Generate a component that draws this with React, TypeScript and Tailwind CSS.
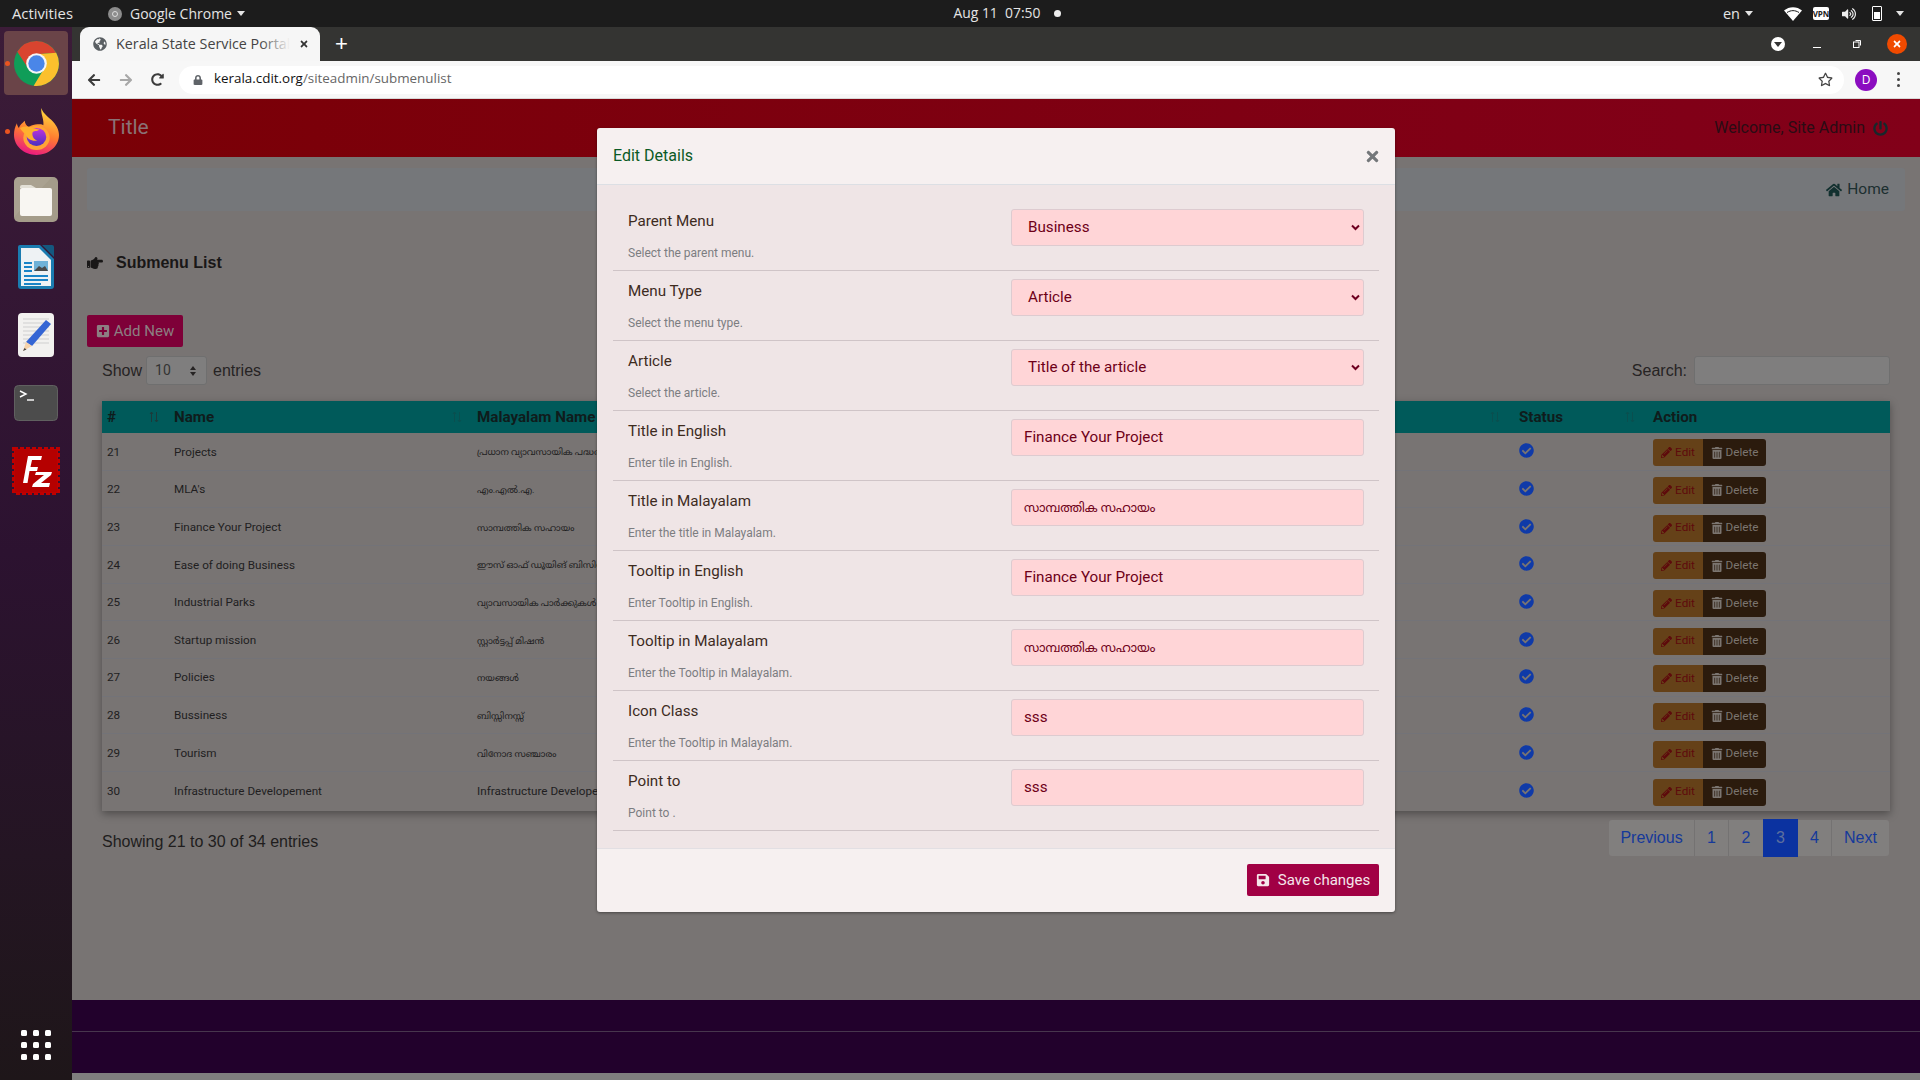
import React from "react";
import { FaHandPointRight, FaHome, FaPencilAlt, FaTrashAlt, FaSave, FaPlusSquare, FaCheckCircle, FaPowerOff, FaGlobeAmericas, FaLock, FaRegStar, FaArrowLeft, FaArrowRight, FaRedoAlt, FaTimes, FaVolumeUp } from "react-icons/fa";

const rows = [
  ["21", "Projects", "പ്രധാന വ്യാവസായിക പദ്ധതികൾ"],
  ["22", "MLA's", "എം.എൽ.എ."],
  ["23", "Finance Your Project", "സാമ്പത്തിക സഹായം"],
  ["24", "Ease of doing Business", "ഈസ് ഓഫ് ഡൂയിങ് ബിസിനസ്"],
  ["25", "Industrial Parks", "വ്യാവസായിക പാർക്കുകൾ"],
  ["26", "Startup mission", "സ്റ്റാർട്ടപ്പ് മിഷൻ"],
  ["27", "Policies", "നയങ്ങൾ"],
  ["28", "Bussiness", "ബിസ്സിനസ്സ്"],
  ["29", "Tourism", "വിനോദ സഞ്ചാരം"],
  ["30", "Infrastructure Developement", "Infrastructure Developement"],
];

const fields: [string, string, string, boolean][] = [
  ["Parent Menu", "Select the parent menu.", "Business", true],
  ["Menu Type", "Select the menu type.", "Article", true],
  ["Article", "Select the article.", "Title of the article", true],
  ["Title in English", "Enter tile in English.", "Finance Your Project", false],
  ["Title in Malayalam", "Enter the title in Malayalam.", "സാമ്പത്തിക സഹായം", false],
  ["Tooltip in English", "Enter Tooltip in English.", "Finance Your Project", false],
  ["Tooltip in Malayalam", "Enter the Tooltip in Malayalam.", "സാമ്പത്തിക സഹായം", false],
  ["Icon Class", "Enter the Tooltip in Malayalam.", "sss", false],
  ["Point to", "Point to .", "sss", false],
];

function SortIcon({ dark }: { dark?: boolean }) {
  return (
    <svg width="10" height="12" viewBox="0 0 10 12" className={dark ? "text-[#1c3a3a]" : "text-[#0a4f4f]"} fill="none" stroke="currentColor" strokeWidth="1">
      <path d="M2.5 11V1.5M1 3l1.5-2L4 3M7.5 1v9.5M6 9l1.5 2L9 9" />
    </svg>
  );
}

function ChromeLogo() {
  return (
    <svg width="45" height="45" viewBox="0 0 48 48">
      <circle cx="24" cy="24" r="24" fill="#0f9d58" />
      <path d="M24 0A24 24 0 0 1 45 12.500L24 14 15 29 3.500 11.500A24 24 0 0 1 24 0Z" fill="#d9442f" />
      <path d="M45 12.500A24 24 0 0 1 21 47.800L33 28 24 14Z" fill="#fbc02d" />
      <circle cx="24" cy="24" r="11" fill="#f5f5f5" />
      <circle cx="24" cy="24" r="8.700" fill="#4a86e8" />
    </svg>
  );
}

function FirefoxLogo() {
  return (
    <svg width="45" height="47" viewBox="0 0 46 52" preserveAspectRatio="none">
      <defs>
        <linearGradient id="ffa" x1="0.7" y1="0" x2="0.4" y2="1">
          <stop offset="0" stopColor="#ffe03d" />
          <stop offset="0.55" stopColor="#ff7a30" />
          <stop offset="1" stopColor="#ea1a80" />
        </linearGradient>
        <linearGradient id="ffb" x1="0.5" y1="0" x2="0.5" y2="1">
          <stop offset="0" stopColor="#c233df" />
          <stop offset="1" stopColor="#4a2fbd" />
        </linearGradient>
      </defs>
      <path d="M28 0c1 5 5 8 10 13 5 5 8 11 8 17C46 43 35 52 23 52 10 52 0 42 0 30c0-5 1-9 3-13 0 2 1 4 2 5 1-3 3-5 6-8 0 3 2 6 4 7 3-2 6-3 9-3 3 0 5 0 6 1 1-6-3-13-2-19Z" fill="url(#ffa)" />
      <circle cx="23" cy="33" r="13.500" fill="#ffa436" />
      <circle cx="23" cy="32" r="10" fill="url(#ffb)" />
      <path d="M6 22c4-2 9-2 13 0 3 1 5 1 7 2-3 2-6 1-7 3-1 3 1 8 5 9-6 1-11-2-12-7-2-1-4-4-6-7Z" fill="#ffb02e" />
    </svg>
  );
}

function FilesIcon() {
  return (
    <svg width="44" height="45" viewBox="0 0 44 45">
      <rect x="0" y="0" width="44" height="45" rx="5" fill="#a49c8a" />
      <path d="M0 40L38 0h-33a5 5 0 0 0-5 5Z" fill="#b3ac9a" opacity="0.4" />
      <path d="M6 10a2 2 0 0 1 2-2h9l5 3H6Z" fill="#e3e0d6" />
      <rect x="6" y="11" width="32" height="28" rx="2" fill="#f8f6f2" />
    </svg>
  );
}

function WriterIcon() {
  return (
    <svg width="36" height="44" viewBox="0 0 36 44">
      <path d="M2 0h20l14 14v27a3 3 0 0 1-3 3H3a3 3 0 0 1-3-3V2a2 2 0 0 1 2-2Z" fill="#1a7cb0" />
      <path d="M3 3h18l12 12v26H3Z" fill="#eef2f4" />
      <path d="M24 0h10a2 2 0 0 1 2 2v10Z" fill="#14587f" />
      <rect x="6" y="17" width="8" height="2" fill="#1a84c7" />
      <rect x="6" y="21" width="8" height="2" fill="#1a84c7" />
      <rect x="6" y="25" width="8" height="2" fill="#1a84c7" />
      <rect x="16" y="16" width="14" height="10" fill="#6fb2d8" />
      <path d="M16 26l5-5 3 2 3-2 3 5Z" fill="#4a4a4a" />
      <rect x="6" y="30" width="24" height="2" fill="#1a84c7" />
      <rect x="6" y="34" width="24" height="2" fill="#1a84c7" />
      <rect x="6" y="38" width="17" height="2" fill="#1a84c7" />
    </svg>
  );
}

function EditorIcon() {
  return (
    <svg width="36" height="44" viewBox="0 0 36 44">
      <rect width="36" height="44" rx="4" fill="#f2f1ef" />
      <path d="M5 6h26M5 10h26M5 14h26M5 18h26M5 22h26M5 26h26M5 30h26" stroke="#cfcfcf" strokeWidth="1" />
      <path d="M28 7l5 4-19 22-6-4Z" fill="#3465d4" />
      <path d="M8 29l6 4-9 5Z" fill="#f6d3aa" />
      <path d="M5 38l1.500-3 2 1.500Z" fill="#444" />
    </svg>
  );
}

function TerminalIcon() {
  return (
    <svg width="44" height="36" viewBox="0 0 44 36">
      <rect x="0.500" y="0.500" width="43" height="35" rx="4" fill="#4c4c4c" stroke="#606060" />
      <path d="M6 6l6 3-6 3" fill="none" stroke="#fff" strokeWidth="1.400" />
      <path d="M13 15h7" stroke="#fff" strokeWidth="1.400" />
    </svg>
  );
}

function FileZillaIcon() {
  return (
    <svg width="48" height="48" viewBox="0 0 48 48">
      <rect x="2" y="2" width="44" height="44" fill="#bf0000" stroke="#bf0000" strokeWidth="4" strokeDasharray="4 2" />
      <rect x="3" y="3" width="42" height="42" fill="#b50000" />
      <path d="M11 36L16 9h14l-1 4H20l-1.500 7H26l-1 4h-7.500L15.500 36Z" fill="#fff" />
      <path d="M24 25h16l-1 3-10 8h9l-1 4H20l1-3 11-9h-9Z" fill="#fff" />
    </svg>
  );
}

function TopBar() {
  const caret = "h-0 w-0 border-x-[4.500px] border-t-[5px] border-x-transparent border-t-[#e4e4e4]";
  const tray = "flex w-[28px] justify-center";
  return (
    <div className="flex h-[27px] items-center bg-[#1c1c1c] text-[14px] text-[#e4e4e4] font-['Open_Sans',sans-serif]">
      <span className="ml-[12px] text-[14.800px]">Activities</span>
      <span className="ml-[35px] flex h-[14px] w-[14px] items-center justify-center rounded-full bg-[#8c8c8c]">
        <span className="h-[6px] w-[6px] rounded-full border border-[#ddd]" />
      </span>
      <span className="ml-[8px]">Google Chrome</span>
      <span className={`ml-[5px] ${caret}`} />
      <div className="flex flex-1 items-center justify-center pl-[47px]">
        <span className="text-[13.900px] whitespace-pre">Aug 11  07:50</span>
        <span className="ml-[14px] h-[7px] w-[7px] rounded-full bg-[#eee]" />
      </div>
      <span className="text-[14.500px]">en</span>
      <span className={`ml-[5px] ${caret}`} />
      <span className={`ml-[26px] ${tray}`}>
        <svg width="18" height="14" viewBox="0 0 18 14"><path d="M0 3.500C5 -1 13 -1 18 3.500L9 14Z" fill="#fff" /><path d="M3 5.500C7 3 11 3 15 5.500" stroke="#1c1c1c" strokeWidth="1" fill="none" /></svg>
      </span>
      <span className={tray}>
        <span className="flex h-[13px] w-[16px] items-center justify-center rounded-[2px] bg-white text-[8px] font-bold text-[#222]">VPN</span>
      </span>
      <span className={tray}><FaVolumeUp className="text-[14px] text-[#eee]" /></span>
      <span className={tray}>
        <span className="flex h-[15px] w-[10px] items-end rounded-[1px] border border-white p-[1px]">
          <span className="h-[7px] w-full bg-white" />
        </span>
      </span>
      <span className="flex w-[18px] justify-center"><span className={caret} /></span>
      <span className="w-[11px]" />
    </div>
  );
}

function Dock() {
  const item = "relative flex h-[68px] w-full items-center justify-center";
  return (
    <div className="flex w-[72px] shrink-0 flex-col items-center bg-gradient-to-b from-[#3c1c38] via-[#2c1230] to-[#1e1619] pt-[2px]">
      <div className={item}>
        <span className="absolute left-[4px] top-[2px] h-[64px] w-[64px] rounded-[4px] bg-[#6a4448]" />
        <span className="relative"><ChromeLogo /></span>
      </div>
      <div className={item}><FirefoxLogo /></div>
      <div className={item}><FilesIcon /></div>
      <div className={item}><WriterIcon /></div>
      <div className={item}><EditorIcon /></div>
      <div className={item}><TerminalIcon /></div>
      <div className={item}><FileZillaIcon /></div>
      <div className="mt-auto mb-[20px] grid grid-cols-3 gap-x-[6px] gap-y-[6px]">
        {Array.from({ length: 9 }).map((_, i) => (
          <span key={i} className="h-[6px] w-[6px] rounded-[1.500px] bg-white" />
        ))}
      </div>
    </div>
  );
}

function ChromeBar() {
  return (
    <>
      <div className="flex h-[34px] items-end bg-[#343432] font-['Open_Sans',sans-serif]">
        <div className="ml-[8px] flex h-[34px] w-[240px] items-center rounded-t-[9px] bg-[#f6f6f6] pl-[13px] text-[14.300px] text-[#444]">
          <FaGlobeAmericas className="shrink-0 text-[14px] text-[#5a5f63]" />
          <span className="relative ml-[9px] w-[174px] overflow-hidden pb-[1px] whitespace-nowrap">
            Kerala State Service Portal
            <span className="absolute inset-y-0 right-0 w-[30px] bg-gradient-to-r from-transparent to-[#f6f6f6]" />
          </span>
          <FaTimes className="ml-[9px] text-[10px] text-[#333]" />
        </div>
        <span className="ml-[15px] mb-[6px] text-[22px] leading-[22px] text-white font-['Liberation_Sans',sans-serif]">+</span>
        <div className="ml-auto flex h-[34px] items-center">
          <span className="flex h-[14px] w-[14px] items-center justify-center rounded-full bg-white">
            <span className="h-0 w-0 border-x-[4px] border-t-[5px] border-x-transparent border-t-[#333]" />
          </span>
          <span className="ml-[28px] mt-[6px] h-[1px] w-[8px] bg-white" />
          <svg className="ml-[32px]" width="8" height="8" viewBox="0 0 8 8" fill="none" stroke="#fff" strokeWidth="1"><rect x="0.500" y="2" width="5.500" height="5.500" /><path d="M2.500 0.500h5v5" /></svg>
          <span className="ml-[26px] mr-[13px] flex h-[20px] w-[20px] items-center justify-center rounded-full bg-[#f04a00]">
            <FaTimes className="text-[10px] text-white" />
          </span>
        </div>
      </div>
      <div className="flex h-[38px] items-center border-b border-[#d8d8d8] bg-[#f7f7f7] font-['Open_Sans',sans-serif]">
        <FaArrowLeft className="ml-[15px] text-[14px] text-[#3c3c3c]" />
        <FaArrowRight className="ml-[18px] text-[14px] text-[#a8a8a8]" />
        <FaRedoAlt className="ml-[18px] text-[13px] text-[#3c3c3c]" />
        <div className="ml-[15px] flex h-[28px] w-[1665px] items-center rounded-full bg-white pl-[14px] text-[13.400px]">
          <FaLock className="text-[10px] text-[#5f6368]" />
          <span className="ml-[11px] pb-[2px] text-[#111]">kerala.cdit.org</span>
          <span className="pb-[2px] text-[#666]">/siteadmin/submenulist</span>
          <FaRegStar className="ml-auto mr-[11px] text-[15px] text-[#444]" />
        </div>
        <span className="ml-[11px] flex h-[22px] w-[22px] items-center justify-center rounded-full bg-[#8b0dc0] text-[12px] text-white">D</span>
        <span className="ml-[20px] flex flex-col gap-[3px]">
          <span className="h-[3px] w-[3px] rounded-full bg-[#444]" />
          <span className="h-[3px] w-[3px] rounded-full bg-[#444]" />
          <span className="h-[3px] w-[3px] rounded-full bg-[#444]" />
        </span>
      </div>
    </>
  );
}

function PageContent() {
  return (
    <div className="flex flex-1 flex-col bg-[#787473] font-['Roboto',sans-serif]">
      <div className="flex h-[58px] shrink-0 items-center bg-gradient-to-r from-[#7a0006] to-[#820019] pl-[36px] pr-[32px]">
        <span className="text-[21px] text-[#8a7276]">Title</span>
        <span className="ml-auto text-[16px] text-[#2a0c14]">Welcome, Site Admin</span>
        <FaPowerOff className="ml-[8px] text-[15px] text-[#16282c]" />
      </div>

      <div className="mx-[15px] mt-[11px] flex h-[43px] shrink-0 items-center justify-end rounded-[3px] bg-[#75777a] pr-[16px] text-[15.500px] text-[#1c2f30]">
        <FaHome className="mr-[5px] text-[16px] text-[#12302f]" />
        <span>Home</span>
      </div>

      <div className="ml-[15px] mt-[42px] flex h-[20px] shrink-0 items-center font-['Liberation_Sans',sans-serif] text-[16px] font-bold text-[#191717]">
        <FaHandPointRight className="text-[16px]" />
        <span className="ml-[13px]">Submenu List</span>
      </div>

      <div className="ml-[15px] mt-[42px] flex h-[32px] w-[96px] shrink-0 items-center justify-center rounded-[2px] bg-[#7e0038] text-[15px] text-[#8c7f82]">
        <FaPlusSquare className="mr-[4px] text-[14px]" />
        Add New
      </div>

      <div className="mx-[30px] mt-[9px] flex h-[29px] shrink-0 items-center font-['Liberation_Sans',sans-serif] text-[16px] text-[#262323]">
        <span>Show</span>
        <span className="ml-[4px] flex h-[29px] w-[61px] items-center justify-between rounded-[3px] border border-[#6f6f6f] bg-[#7f7e7e] pl-[8px] pr-[10px] font-['Roboto',sans-serif] text-[14px] text-[#333]">
          10
          <span className="flex flex-col gap-[2px]">
            <span className="h-0 w-0 border-x-[3.500px] border-b-[4px] border-x-transparent border-b-[#262323]" />
            <span className="h-0 w-0 border-x-[3.500px] border-t-[4px] border-x-transparent border-t-[#262323]" />
          </span>
        </span>
        <span className="ml-[6px]">entries</span>
        <span className="ml-auto mr-[7px]">Search:</span>
        <span className="h-[29px] w-[196px] rounded-[3px] border border-[#6f6f6f] bg-[#7f7e7e]" />
      </div>

      <div className="mx-[30px] mt-[16px] shrink-0 bg-[#787473] pb-[1.300px] shadow-[0_3px_8px_rgba(0,0,0,0.35)]">
        <div className="grid h-[32px] grid-cols-[67px_303px_1fr_134px_242px] items-center bg-[#005a5a] text-[15.200px] font-bold text-[#0f1c1c]">
          <div className="flex items-center justify-between pl-[5px] pr-[10px]"><span>#</span><SortIcon dark /></div>
          <div className="flex items-center justify-between pl-[5px] pr-[10px]"><span>Name</span><SortIcon /></div>
          <div className="flex items-center justify-between pl-[5px] pr-[14px]"><span>Malayalam Name</span><SortIcon /></div>
          <div className="flex items-center justify-between pl-[5px] pr-[13px]"><span>Status</span><SortIcon /></div>
          <div className="pl-[5px]">Action</div>
        </div>
        {rows.map((r) => (
          <div key={r[0]} className="grid h-[37.670px] grid-cols-[67px_303px_1fr_134px_242px] items-center border-b border-[#737378] pt-[2px] text-[11.700px] text-[#211e1f] last:border-b-0">
            <div className="pl-[5px]">{r[0]}</div>
            <div className="pl-[5px]">{r[1]}</div>
            <div className={`overflow-hidden whitespace-nowrap pl-[5px] font-['Roboto','Noto_Sans_Malayalam','Noto_Sans',sans-serif] ${r[0] === "30" ? "text-[11.700px]" : "text-[9.200px]"}`}>{r[2]}</div>
            <div className="pl-[5px]"><FaCheckCircle className="mb-[3px] text-[15px] text-[#0f3aa8]" /></div>
            <div className="mt-[1px] flex pl-[5px]">
              <span className="flex h-[27px] w-[50px] items-center justify-center rounded-l-[3px] bg-[#654118] text-[#5e0a0c]">
                <FaPencilAlt className="mr-[3px] text-[11px]" />Edit
              </span>
              <span className="flex h-[27px] w-[63px] items-center justify-center rounded-r-[3px] bg-[#2b1b0d] text-[#7b7570]">
                <FaTrashAlt className="mr-[3px] text-[12px]" />Delete
              </span>
            </div>
          </div>
        ))}
      </div>

      <div className="mx-[30px] mt-[8px] flex h-[38px] shrink-0 items-center font-['Liberation_Sans',sans-serif] text-[16px]">
        <span className="mt-[8px] text-[#201d1d]">Showing 21 to 30 of 34 entries</span>
        <div className="mr-[1px] ml-auto flex h-[36px] items-center text-[#15399a]">
          <span className="flex h-[36px] w-[86px] items-center justify-center rounded-l-[3px] border-r border-[#747272] bg-[#817f7e]">Previous</span>
          <span className="flex h-[36px] w-[34px] items-center justify-center border-r border-[#747272] bg-[#817f7e]">1</span>
          <span className="flex h-[36px] w-[34px] items-center justify-center bg-[#817f7e]">2</span>
          <span className="flex h-[38px] w-[35px] items-center justify-center bg-[#0b32a0] text-[#5d6f9e]">3</span>
          <span className="flex h-[36px] w-[34px] items-center justify-center border-r border-[#747272] bg-[#817f7e]">4</span>
          <span className="flex h-[36px] w-[57px] items-center justify-center rounded-r-[3px] bg-[#817f7e]">Next</span>
        </div>
      </div>

      <div className="mt-auto h-[73px] shrink-0 bg-[#22012c]">
        <div className="h-[32px] border-b border-[#47364d]" />
      </div>
      <div className="h-[7px] shrink-0 bg-[#7f7e7e]" />
    </div>
  );
}

function Modal() {
  return (
    <div className="absolute left-[597px] top-[128px] flex h-[784px] w-[798px] flex-col overflow-hidden rounded-[3px] bg-[#f6f0f0] font-['Roboto',sans-serif] shadow-[0_1px_3px_rgba(0,0,0,0.4)]">
      <div className="flex h-[57px] shrink-0 items-center justify-between border-b border-[#dcdfe4] pl-[16px] pr-[14px]">
        <span className="text-[16px] text-[#0b5a25]">Edit Details</span>
        <FaTimes className="text-[17px] text-[#74777a]" />
      </div>
      <div className="flex-1 bg-[#efe5e6] pl-[16px] pr-[16px] pt-[16px]">
        {fields.map(([label, help, value, isSelect]) => (
          <div key={label} className="flex h-[70px] border-b-[1.500px] border-[#cfc4c7] pl-[15px]">
            <div className="w-[383px] shrink-0">
              <div className="mt-[10px] h-[20px] text-[15.200px] leading-[20px] text-[#3d2b1e]">{label}</div>
              <div className="mt-[15px] text-[12px] leading-[14px] text-[#7c7d81]">{help}</div>
            </div>
            <div className={`mt-[8px] flex h-[37px] w-[353px] items-center rounded-[3px] border border-[#ddcbd0] bg-[#ffd5d7] text-[#6e0018] font-['Roboto','Noto_Sans_Malayalam',sans-serif] ${/[a-z]/i.test(value) ? "text-[15.200px]" : "pt-[2px] text-[12.400px]"} ${isSelect ? "pl-[16px]" : "pl-[12px]"}`}>
              <span>{value}</span>
              {isSelect && (
                <svg className="ml-auto mr-[3px]" width="9" height="7" viewBox="0 0 9 7" fill="none" stroke="#6e0020" strokeWidth="2"><path d="M1 1.500l3.500 3.500 3.500-3.500" /></svg>
              )}
            </div>
          </div>
        ))}
      </div>
      <div className="flex h-[64px] shrink-0 items-center justify-end border-t border-[#e2dfe3] pb-[1px] pr-[16px]">
        <span className="flex h-[32px] w-[132px] items-center justify-center rounded-[2px] bg-[#a10044] text-[15px] text-[#f5e6ea]">
          <FaSave className="mr-[8px] text-[14px]" />Save changes
        </span>
      </div>
    </div>
  );
}

export default function App() {
  return (
    <div className="relative flex h-[1080px] w-[1920px] flex-col overflow-hidden">
      <TopBar />
      <div className="flex flex-1">
        <Dock />
        <div className="flex flex-1 flex-col">
          <ChromeBar />
          <PageContent />
        </div>
      </div>
      <Modal />
      <span className="absolute left-[5px] top-[61px] h-[5px] w-[5px] rounded-full bg-[#e95420]" />
      <span className="absolute left-[5px] top-[129px] h-[5px] w-[5px] rounded-full bg-[#e95420]" />
    </div>
  );
}
